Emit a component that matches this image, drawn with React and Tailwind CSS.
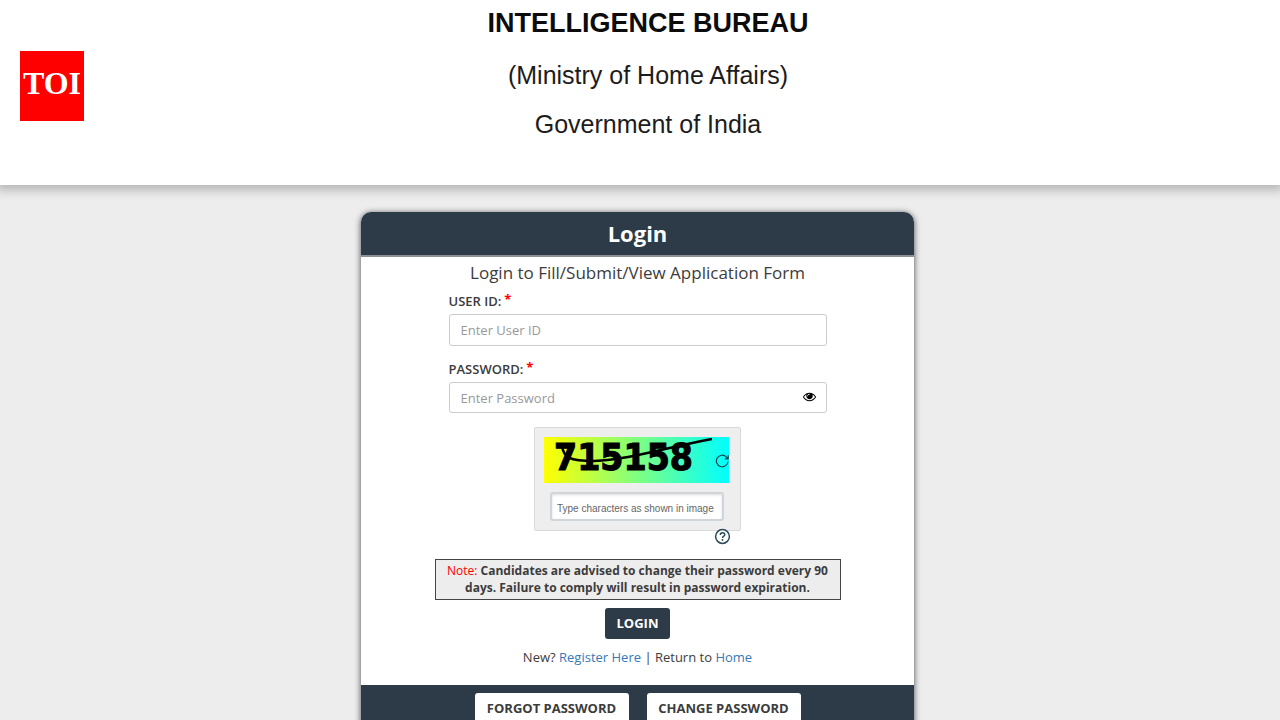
import React, { useState } from "react";

const Header = () => (
  <header className="flex items-start bg-white pl-5 pr-[68px] pb-[46px] shadow-[0_1px_10px_4px_#b4b4b4]">
    <a
      href="#toi"
      className="mt-[51px] flex h-[70px] w-16 shrink-0 justify-center bg-[#ff0000] pt-[14px] font-['Liberation_Serif',serif] text-[32px] leading-9 font-bold text-white"
    >
      TOI
    </a>
    <div className="flex-1 pt-2 text-center font-['Liberation_Sans',sans-serif] text-[25px] leading-[30px] text-[#1c1c1c]">
      <h1 className="text-[27px] font-bold text-[#0c0c0c]">
        INTELLIGENCE BUREAU
      </h1>
      <p className="mt-[22px]">(Ministry of Home Affairs)</p>
      <p className="mt-[19px]">Government of India</p>
    </div>
  </header>
);

const FieldLabel = ({ htmlFor, children }) => (
  <label
    htmlFor={htmlFor}
    className="flex gap-[3px] text-[13px] leading-[18px] font-semibold text-[#3c3c3c]"
  >
    {children}
    <span className="-mt-0.5 font-bold text-[#ff0000]">*</span>
  </label>
);

const EyeIcon = () => (
  <svg className="size-[13px]" viewBox="0 0 1792 1792" fill="currentColor">
    <path d="M1664 960q-152-236-381-353 61 104 61 225 0 185-131.5 316.5t-316.5 131.5-316.5-131.5-131.5-316.5q0-121 61-225-229 117-381 353 133 205 333.5 326.5t434.5 121.5 434.5-121.5 333.5-326.5zm-720-384q0-20-14-34t-34-14q-125 0-214.5 89.5t-89.5 214.5q0 20 14 34t34 14 34-14 14-34q0-86 61-147t147-61q20 0 34-14t14-34zm848 384q0 34-20 69-140 230-376.5 368.5t-499.5 138.5-499.5-139-376.5-368q-20-35-20-69t20-69q140-229 376.5-368t499.5-139 499.5 139 376.5 368q20 35 20 69z" />
  </svg>
);

const Captcha = () => (
  <div className="mx-auto mt-[14px] w-[207px]">
    <div className="rounded-xs border border-[#dadada] bg-[#eeeeee] py-[9px] pr-[11px] pl-[9px]">
      <div className="relative h-[46px] bg-linear-to-r/srgb from-[#ffff00] to-[#00ffff]">
        <svg
          className="h-[46px] w-[184px]"
          viewBox="0 0 184 46"
          role="img"
          aria-label="Captcha"
        >
          <text
            x="10"
            y="33"
            fontSize="37"
            fontWeight="bold"
            fontFamily="DejaVu Sans Condensed, DejaVu Sans, sans-serif"
            stroke="#000"
            strokeWidth="1"
          >
            715158
          </text>
          <path
            d="M18 8 C19 21 26 24 50 24 C84 23 120 11 168 2"
            fill="none"
            stroke="#000"
            strokeWidth="2.5"
          />
        </svg>
        <button
          type="button"
          aria-label="Refresh captcha"
          className="absolute top-[17px] right-0"
        >
          <svg
            className="size-[14px]"
            viewBox="0 0 14 14"
            fill="none"
            stroke="#1f4650"
            strokeWidth="1.2"
          >
            <path d="M13 7.5A5.8 5.8 0 1 1 11.4 3L13.2 4.6M13.2 1.2V4.8H9.8" />
          </svg>
        </button>
      </div>
      <input
        type="text"
        aria-label="Type characters as shown in image"
        placeholder="Type characters as shown in image"
        className="mt-[9px] ml-[6px] block h-[29px] w-[174px] rounded-[3px] border-2 border-[#cfd5d8] bg-white px-[5px] pt-1 font-['Liberation_Sans',sans-serif] text-[10px] shadow-[inset_0_1px_3px_#ddd] placeholder:text-[#666]"
      />
    </div>
    <div className="-mt-[3px] flex justify-end pr-[10px]">
      <button type="button" aria-label="Help" className="relative">
        <svg
          className="size-[17px]"
          viewBox="0 0 17 17"
          fill="none"
          stroke="#2c4a57"
          strokeWidth="1.5"
        >
          <circle cx="8.5" cy="8.5" r="6.9" fill="#fff" />
          <path d="M6.3 6.9C6.3 4 10.8 4 10.8 6.7C10.8 8.2 8.5 8.2 8.5 10M8.5 11.1V12.7" />
        </svg>
      </button>
    </div>
  </div>
);

const App = () => {
  const [showPassword, setShowPassword] = useState(false);

  return (
    <div className="min-h-screen bg-[#ededed] font-['Open_Sans',sans-serif] text-[#3c3c3c]">
      <Header />
      <main className="pt-[27px] pr-[5px]">
        <div className="mx-auto w-full max-w-[553px] overflow-hidden rounded-t-[10px] bg-white shadow-[0_1px_6px_#444]">
          <h2 className="border-b-2 border-[#8a9096] bg-[#2d3a47] text-center text-[22px] leading-[43px] font-bold text-white">
            Login
          </h2>
          <form onSubmit={(e) => e.preventDefault()}>
            <div className="mx-auto w-[378px] pt-1">
              <p className="text-center text-[17px] leading-6">
                Login to Fill/Submit/View Application Form
              </p>
              <div className="mt-[7px]">
                <FieldLabel htmlFor="userId">USER ID:</FieldLabel>
                <input
                  id="userId"
                  type="text"
                  placeholder="Enter User ID"
                  className="mt-1 block h-8 w-full rounded-[3px] border border-[#cccccc] px-[11px] text-[13px] placeholder:text-[#999]"
                />
              </div>
              <div className="mt-[14px]">
                <FieldLabel htmlFor="password">PASSWORD:</FieldLabel>
                <div className="relative mt-1">
                  <input
                    id="password"
                    type={showPassword ? "text" : "password"}
                    placeholder="Enter Password"
                    className="block h-[31px] w-full rounded-[3px] border border-[#cccccc] px-[11px] text-[13px] placeholder:text-[#999]"
                  />
                  <button
                    type="button"
                    aria-label="Show password"
                    onClick={() => setShowPassword(!showPassword)}
                    className="absolute top-2 right-[11px] text-black"
                  >
                    <EyeIcon />
                  </button>
                </div>
              </div>
            </div>
            <Captcha />
            <p className="mx-auto mt-[14px] w-[406px] border border-[#444] bg-[#ededed] px-2 pt-[2px] pb-[3px] text-center text-[12px] leading-[17px] font-bold">
              <span className="font-normal text-[#ff0000]">Note:</span>{" "}
              Candidates are advised to change their password every 90 days.
              Failure to comply will result in password expiration.
            </p>
            <div className="mt-2 text-center">
              <button
                type="submit"
                className="h-[31px] rounded-[3px] bg-[#2d3a47] px-3 text-[13px] font-bold text-white"
              >
                LOGIN
              </button>
            </div>
            <p className="mt-2 pb-[18px] text-center text-[13px] leading-5">
              New?{" "}
              <a href="#register" className="text-[#337ab7]">
                Register Here
              </a>{" "}
              | Return to{" "}
              <a href="#home" className="text-[#337ab7]">
                Home
              </a>
            </p>
          </form>
          <div className="flex justify-center gap-[18px] bg-[#2d3a47] py-2 text-[13px] font-bold">
            <button
              type="button"
              className="h-[31px] w-[154px] rounded-[3px] bg-white"
            >
              FORGOT PASSWORD
            </button>
            <button
              type="button"
              className="h-[31px] w-[154px] rounded-[3px] bg-white"
            >
              CHANGE PASSWORD
            </button>
          </div>
        </div>
      </main>
    </div>
  );
};

export default App;
